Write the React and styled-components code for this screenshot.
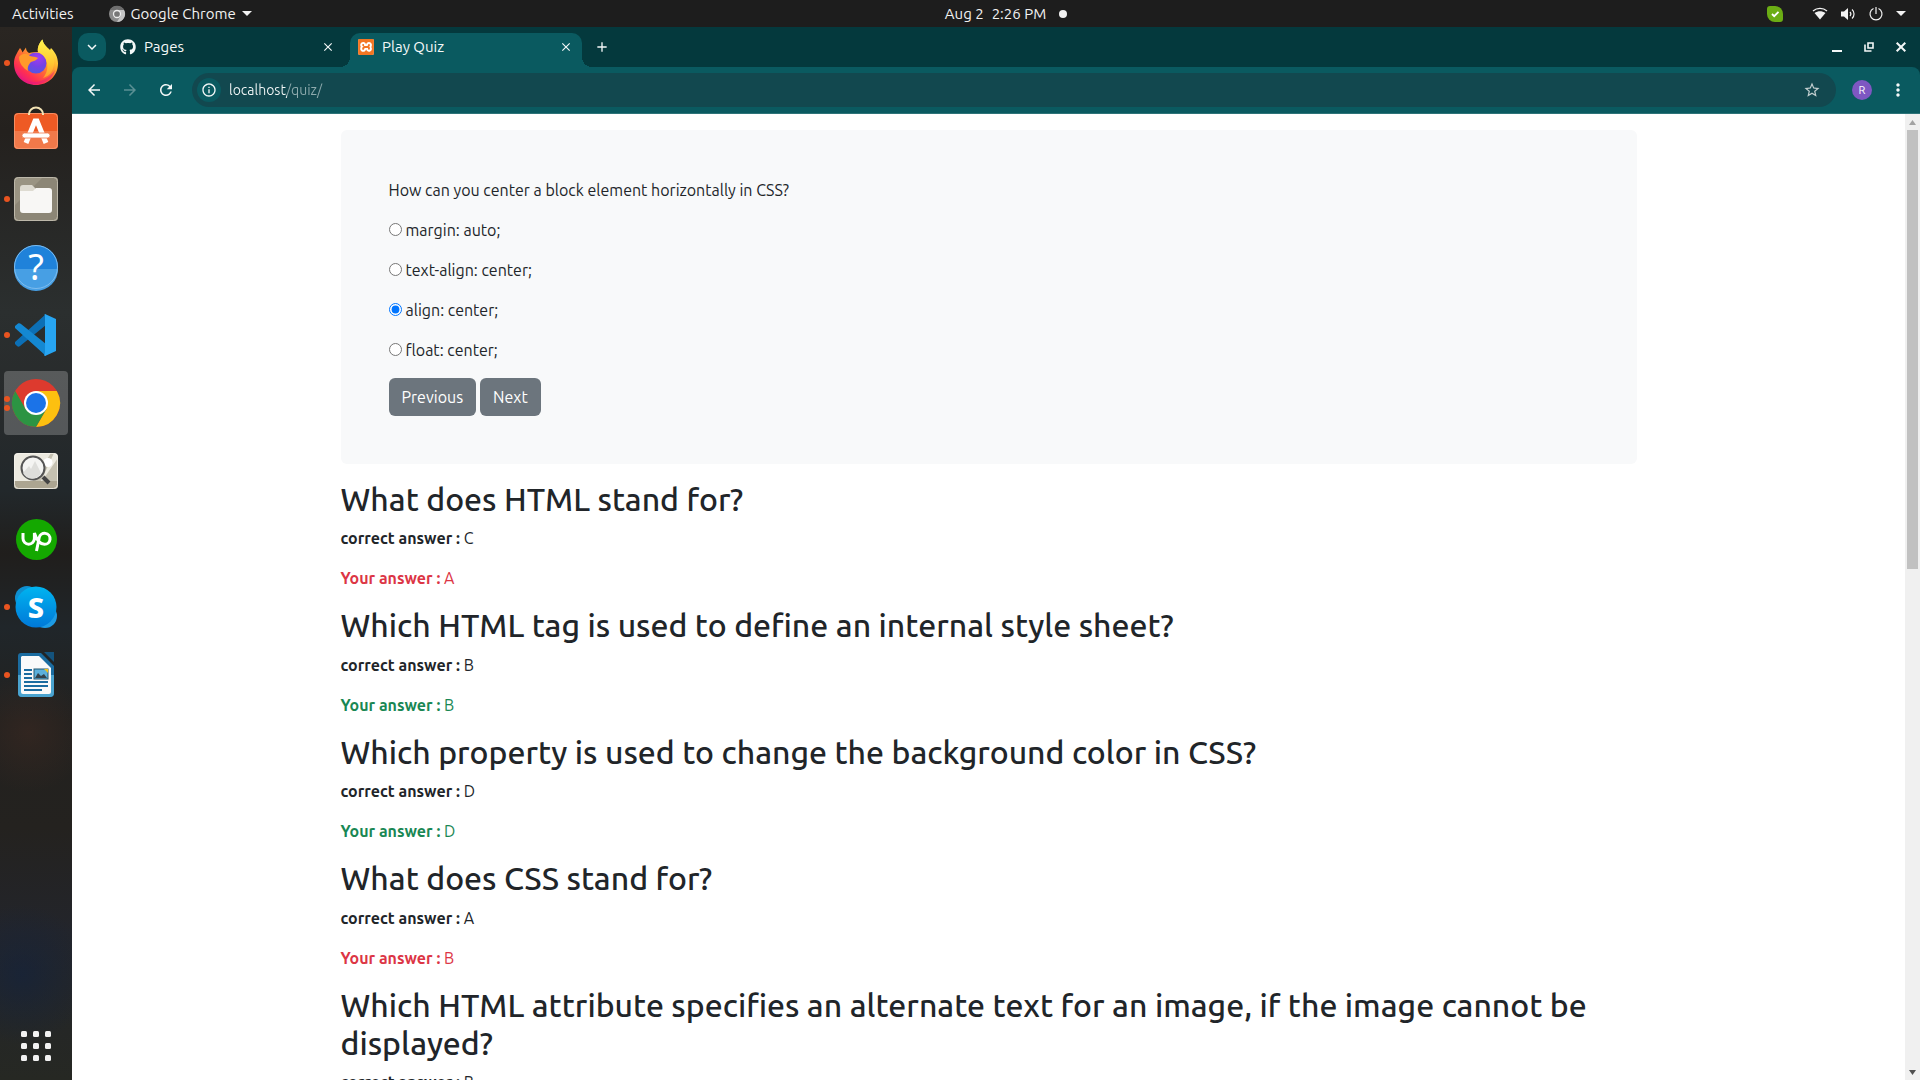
import React, { useState } from "react";
import styled, { createGlobalStyle, css } from "styled-components";
import { FaGithub } from "react-icons/fa";
import { SiXampp } from "react-icons/si";
import {
  MdArrowBack,
  MdArrowForward,
  MdRefresh,
  MdClose,
  MdAdd,
  MdStarBorder,
  MdMoreVert,
  MdKeyboardArrowDown,
  MdInfoOutline,
} from "react-icons/md";

const GlobalStyle = createGlobalStyle`
  *, *::before, *::after { box-sizing: border-box; }
  body {
    margin: 0;
    overflow: hidden;
    background: #1d1d1d;
    color: #212529;
    font-family: Ubuntu, "Noto Sans", "Open Sans", sans-serif;
    font-size: 16px;
    line-height: 24px;
  }
  button, input { font: inherit; }
  button { border: 0; padding: 0; background: none; color: inherit; cursor: pointer; }
  svg { display: block; flex: none; overflow: visible; }
`;

const Desktop = styled.div`
  display: flex;
  flex-direction: column;
  height: 100vh;
`;

/* ---------- system bar ---------- */

const SystemBar = styled.header`
  flex: none;
  display: grid;
  grid-template-columns: 1fr auto 1fr;
  align-items: center;
  height: 27px;
  padding: 0 14px 0 12px;
  background: #1d1d1d;
  color: #f2f2f2;
  font-size: 15px;
`;

const BarGroup = styled.div`
  display: flex;
  align-items: center;
  gap: ${(p) => p.$gap}px;
  justify-content: ${(p) => (p.$end ? "flex-end" : "flex-start")};
`;

const BarButton = styled.button`
  display: flex;
  align-items: center;
  gap: 6px;
`;

const Clock = styled.button`
  display: flex;
  align-items: center;
  gap: 8px;
  padding-left: 94px;
`;

const NotificationDot = styled.span`
  width: 8px;
  height: 8px;
  margin-left: 5px;
  border-radius: 50%;
  background: #f2f2f2;
`;

const StatusItem = styled.span`
  margin-right: ${(p) => p.$space}px;
`;

/* ---------- dock ---------- */

const Workspace = styled.div`
  flex: 1;
  display: flex;
  min-height: 0;
`;

const Dock = styled.nav`
  flex: none;
  display: flex;
  flex-direction: column;
  justify-content: space-between;
  align-items: center;
  width: 72px;
  padding: 4px 0 2px;
  background:
    radial-gradient(circle at 30% 90%, rgba(18, 34, 62, 0.6), transparent 70px),
    radial-gradient(circle at 40% 67%, rgba(64, 42, 34, 0.5), transparent 60px),
    linear-gradient(#2a2622 0%, #24211e 10%, #2b2f2f 27%, #282b2c 35%, #22282b 44%, #201e1c 50%, #20262a 57%, #22211f 66%, #24221f 76%, #23252b 86%, #262823 100%);
`;

const DockList = styled.div`
  display: flex;
  flex-direction: column;
  gap: 4px;
`;

const DockButton = styled.button`
  position: relative;
  display: flex;
  align-items: center;
  justify-content: center;
  width: 64px;
  height: 64px;
  border-radius: 4px;
  ${(p) =>
    p.$active &&
    css`
      background: rgba(255, 255, 255, 0.22);
    `}
`;

const Running = styled.span`
  position: absolute;
  left: 0;
  top: 0;
  bottom: 0;
  display: flex;
  flex-direction: column;
  justify-content: center;
  gap: 3px;
`;

const RunningDot = styled.span`
  width: 6px;
  height: 6px;
  border-radius: 50%;
  background: #e95420;
`;

/* ---------- browser ---------- */

const Browser = styled.div`
  flex: 1;
  display: flex;
  flex-direction: column;
  min-width: 0;
  background: #04393d;
  color: #f4f8f8;
  font-size: 15px;
`;

const TabStrip = styled.div`
  display: flex;
  align-items: flex-start;
  height: 40px;
  padding: 6px 12px 0 6px;
`;

const TabSearch = styled.button`
  display: flex;
  align-items: center;
  justify-content: center;
  width: 28px;
  height: 28px;
  border-radius: 10px;
  background: #0a5a60;
`;

const Tab = styled.div`
  position: relative;
  display: flex;
  align-items: center;
  width: ${(p) => (p.$active ? 232 : 244)}px;
  height: 34px;
  padding: ${(p) => (p.$active ? "0 9px 6px 8px" : "0 15px 6px 14px")};
  border-radius: 10px 10px 0 0;
  ${(p) =>
    p.$active &&
    css`
      background: #0a5a60;
      &::before,
      &::after {
        content: "";
        position: absolute;
        bottom: 0;
        width: 10px;
        height: 10px;
      }
      &::before {
        right: 100%;
        background: radial-gradient(circle at 0 0, transparent 10px, #0a5a60 10px);
      }
      &::after {
        left: 100%;
        background: radial-gradient(circle at 100% 0, transparent 10px, #0a5a60 10px);
      }
    `}
`;

const TabTitle = styled.button`
  flex: 1;
  display: flex;
  align-items: center;
  gap: 8px;
  text-align: left;
`;

const Favicon = styled.span`
  display: flex;
  align-items: center;
  justify-content: center;
  width: 16px;
  height: 16px;
  border-radius: 2px;
  background: ${(p) => p.$bg || "transparent"};
`;

const IconButton = styled.button`
  display: flex;
  align-items: center;
  justify-content: center;
  width: ${(p) => p.$size}px;
  height: ${(p) => p.$size}px;
  color: ${(p) => (p.$dim ? "#5b9094" : "inherit")};
`;

const NewTab = styled(IconButton)`
  margin: 0 auto 0 6px;
`;

const WindowControls = styled.div`
  display: flex;
  align-items: center;
  height: 28px;
  gap: 18px;
`;

const Toolbar = styled.div`
  display: flex;
  align-items: center;
  height: 47px;
  padding: 0 14px 1px 4px;
  border-bottom: 1px solid #2d7378;
  border-radius: 8px 8px 0 0;
  background: #0a5a60;
`;

const AddressBar = styled.label`
  flex: 1;
  display: flex;
  align-items: center;
  height: 34px;
  margin-left: 8px;
  padding: 0 15px 0 5px;
  border-radius: 17px;
  background: #12484f;
`;

const SiteInfo = styled.button`
  display: flex;
  align-items: center;
  justify-content: center;
  width: 24px;
  height: 24px;
  border-radius: 50%;
  background: #0a5a60;
`;

const Address = styled.input`
  flex: 1;
  min-width: 0;
  margin-left: 8px;
  padding: 0;
  border: 0;
  outline: 0;
  font-size: 14px;
  color: #f4f8f8;
  background: linear-gradient(90deg, #f4f8f8 58px, #8fabae 58px);
  background-clip: text;
  -webkit-background-clip: text;
  -webkit-text-fill-color: transparent;
`;

const Avatar = styled.button`
  width: 20px;
  height: 20px;
  margin: 0 18px 0 16px;
  border-radius: 50%;
  background: #7e57c2;
  color: #fff;
  font-size: 11px;
  line-height: 20px;
`;

/* ---------- page ---------- */

const Viewport = styled.div`
  flex: 1;
  display: flex;
  min-height: 0;
  background: #fff;
  color: #212529;
  font-size: 16px;
`;

const Page = styled.main`
  flex: 1;
  min-width: 0;
  overflow: hidden;
`;

const Container = styled.div`
  max-width: 1320px;
  margin: 0 auto;
  padding: 16px 12px 0;
`;

const Card = styled.form`
  margin-bottom: 16px;
  padding: 48px;
  border-radius: 6px;
  background: #f8f9fa;
`;

const Paragraph = styled.p`
  margin: 0 0 16px;
  color: ${(p) => p.$color || "inherit"};
`;

const Radio = styled.input`
  width: 13px;
  height: 13px;
  margin: 0 4px 0 0;
`;

const Actions = styled.div`
  display: flex;
  gap: 4px;
`;

const Button = styled.button`
  padding: 7px 13px;
  border-radius: 6px;
  background: #6c757d;
  color: #fff;
`;

const Question = styled.h2`
  margin: 0 0 8px;
  font-size: 32px;
  font-weight: 500;
  line-height: 1.2;
`;

const ScrollTrack = styled.div`
  flex: none;
  display: flex;
  flex-direction: column;
  align-items: center;
  width: 15px;
  padding: 6px 0 5px;
  gap: 5px;
  background: #f0f0f0;
`;

const ScrollSpace = styled.div`
  flex: 1;
  align-self: stretch;
  padding: 0 2px;
`;

const ScrollThumb = styled.div`
  height: 47%;
  background: #c1c1c1;
`;

/* ---------- dock drawings ---------- */

const Firefox = () => (
  <svg width="46" height="48" viewBox="0 0 46 48" aria-hidden="true">
    <defs>
      <linearGradient id="fxBody" x1="0.85" y1="0.1" x2="0.2" y2="0.95">
        <stop offset="0" stopColor="#fff44f" />
        <stop offset="0.3" stopColor="#ffb52e" />
        <stop offset="0.55" stopColor="#ff6a35" />
        <stop offset="0.8" stopColor="#ff2f51" />
        <stop offset="1" stopColor="#e31587" />
      </linearGradient>
      <radialGradient id="fxGlobe" cx="0.6" cy="0.25" r="0.85">
        <stop offset="0" stopColor="#a23bf0" />
        <stop offset="0.5" stopColor="#7542e5" />
        <stop offset="1" stopColor="#4a5ce0" />
      </radialGradient>
      <linearGradient id="fxTail" x1="0.5" y1="0" x2="0.5" y2="1">
        <stop offset="0" stopColor="#fff44f" />
        <stop offset="0.6" stopColor="#ffc932" />
        <stop offset="1" stopColor="#ff9a2e" />
      </linearGradient>
    </defs>
    <path d="M7 9 C8 10 9 12 9.500 13.500 L13 8.500 C13 11 14 13 16 14 C19 13 23 13 25 13 C24 8 27 3 29.500 0.500 C30 5 34 8 37 11 L38 9 C42 13 45 18 45 24.500 C45 37 35 46 23 46 C11 46 1 37 1 24.500 C1 18 4 14 7 9Z" fill="url(#fxBody)" />
    <circle cx="23" cy="24" r="10.500" fill="url(#fxGlobe)" />
    <path d="M25 13 C24 8 27 3 29.500 0.500 C30 6 35 9 38 13 C42 19 42 26 39 32 C37 36 33 38 30 39 C34 34 35 29 34 24 C33 18 29 15 25 13Z" fill="url(#fxTail)" />
    <path d="M6 18 C9 14 14 14 17 17 C20 18 23 17.500 25 19 C24 21 21 22 18 23 C16 25 14 28 15 32 C10 29 6 24 6 18Z" fill="#ff9a2b" />
    <path d="M3 32 C8 43 22 46 32 40 C36 38 40 34 42 31 C40 40 32 45 23 45 C14 45 6 40 3 32Z" fill="#e31587" opacity="0.45" />
  </svg>
);

const SoftwareStore = () => (
  <svg width="46" height="50" viewBox="0 0 46 50" aria-hidden="true">
    <rect x="1" y="7" width="44" height="36" rx="4" fill="#ee5a24" />
    <path d="M1 25 H45 V39 A4 4 0 0 1 41 43 H5 A4 4 0 0 1 1 39Z" fill="#f1794a" />
    <rect x="1.500" y="7.500" width="43" height="35" rx="4" fill="none" stroke="#f9a27e" strokeOpacity="0.7" />
    <path d="M16 9 V8 A7 6.500 0 0 1 30 8 V9" fill="none" stroke="#f3e3b4" strokeWidth="2" />
    <path d="M13 37 L22 15 H24 L33 37" fill="none" stroke="#fff" strokeWidth="5" />
    <rect x="9" y="27" width="28" height="5" rx="2.500" fill="#fff" stroke="#ef7c50" strokeWidth="0.800" />
  </svg>
);

const Files = () => (
  <svg width="46" height="46" viewBox="0 0 46 46" aria-hidden="true">
    <rect x="1" y="1" width="44" height="44" rx="4" fill="#9a9483" />
    <path d="M1 30 L30 1 H41 A4 4 0 0 1 45 5 V41 A4 4 0 0 1 41 45 H5 A4 4 0 0 1 1 41Z" fill="#8c8676" />
    <rect x="1.500" y="1.500" width="43" height="43" rx="4" fill="none" stroke="#bdb8aa" />
    <path d="M7 12 A3 3 0 0 1 10 9 H19 L23 13 H36 V20 H7Z" fill="#dedbd1" />
    <path d="M7 15 H20 L23 12 H36 A3 3 0 0 1 39 15 V34 A3 3 0 0 1 36 37 H10 A3 3 0 0 1 7 34Z" fill="#f8f7f5" />
  </svg>
);

const Help = () => (
  <svg width="46" height="46" viewBox="0 0 46 46" aria-hidden="true">
    <circle cx="23" cy="23" r="22" fill="#1f82da" />
    <path d="M1 25 H45 A22 22 0 0 1 1 25Z" fill="#479fe4" />
    <circle cx="23" cy="23" r="21.500" fill="none" stroke="#7dbcee" />
    <text x="23" y="36" textAnchor="middle" fontFamily="Noto Sans" fontSize="36" fill="#fff">?</text>
  </svg>
);

const Code = () => (
  <svg width="44" height="44" viewBox="0 0 44 44" aria-hidden="true">
    <path d="M1 29 L32 1 V12 L6 33 C5 34 4 34 3 33 L1 31Z" fill="#0c6fb5" />
    <path d="M1 13 L4 10.500 C5 10 6 10 7 11 L32 31 V43 L1 15Z" fill="#1488d2" />
    <path d="M31 1 L42 6 V38 L31 43 C30 43 30 42 31 40 V4 C31 2 30 1 31 1Z" fill="#27a5f2" />
  </svg>
);

const Chrome = () => (
  <svg width="48" height="48" viewBox="0 0 48 48" aria-hidden="true">
    <circle cx="24" cy="24" r="24" fill="#dd3a2e" />
    <path d="M24 12 H44.800 A24 24 0 0 1 24 48 L34.400 30Z" fill="#fdc010" />
    <path d="M13.600 30 L3.200 12 A24 24 0 0 0 24 48 L34.400 30Z" fill="#2c9443" />
    <circle cx="24" cy="24" r="12" fill="#fff" />
    <circle cx="24" cy="24" r="10" fill="#1b73e8" />
  </svg>
);

const ImageViewer = () => (
  <svg width="46" height="38" viewBox="0 0 46 38" aria-hidden="true">
    <rect x="1" y="1" width="44" height="36" rx="4" fill="#eceae0" />
    <path d="M29 29 L45 6 V29Z M20 29 L38 1 H41 L28 29Z" fill="#c5c1b1" />
    <path d="M1 29 H45 V33 A4 4 0 0 1 41 37 H5 A4 4 0 0 1 1 33Z" fill="#aca591" />
    <circle cx="35" cy="10.500" r="4.500" fill="#fff" />
    <path d="M30 25 L36 31" stroke="#444" strokeWidth="4" />
    <circle cx="20" cy="16" r="11.500" fill="#f4f4f2" stroke="#555" strokeWidth="2" />
    <path d="M10 21 L16 14 L18 17 L22 9 L28 21 A10 10 0 0 1 10 21Z" fill="#dededb" />
    <rect x="1.500" y="1.500" width="43" height="35" rx="4" fill="none" stroke="#f6f4ec" strokeOpacity="0.8" />
  </svg>
);

const Upwork = () => (
  <svg width="41" height="41" viewBox="0 0 41 41" aria-hidden="true">
    <circle cx="20.500" cy="20.500" r="20.500" fill="#14a800" />
    <path
      d="M7 14 V19.500 A5.700 5.700 0 0 0 18.400 19.500 V14 C20 19 23 25.300 28.500 25.300 A5.500 5.500 0 1 0 23.200 18.500 L20.500 32"
      fill="none"
      stroke="#fff"
      strokeWidth="3"
    />
  </svg>
);

const Skype = () => (
  <svg width="44" height="44" viewBox="0 0 44 44" aria-hidden="true">
    <defs>
      <linearGradient id="skypeFill" x1="0" y1="0" x2="0" y2="1">
        <stop offset="0" stopColor="#00b4f0" />
        <stop offset="1" stopColor="#0078d8" />
      </linearGradient>
    </defs>
    <circle cx="13" cy="13" r="12" fill="#0f8fd0" />
    <circle cx="31" cy="31" r="12" fill="#1d9be4" />
    <circle cx="22" cy="22" r="20.500" fill="url(#skypeFill)" />
    <text x="22" y="32.500" textAnchor="middle" fontFamily="Noto Sans" fontWeight="800" fontSize="29" fill="#fff">S</text>
  </svg>
);

const Writer = () => (
  <svg width="38" height="46" viewBox="0 0 38 46" aria-hidden="true">
    <path d="M4 1 H24 L37 14 V41 A4 4 0 0 1 33 45 H5 A4 4 0 0 1 1 41 V4 A3 3 0 0 1 4 1Z" fill="#1b6ca0" />
    <path d="M1 23 H37 V41 A4 4 0 0 1 33 45 H5 A4 4 0 0 1 1 41Z" fill="#4aa3cf" />
    <path d="M5 4 H22 L34 16 V40 A2 2 0 0 1 32 42 H6 A2 2 0 0 1 4 40 V5Z" fill="#fafafa" />
    <path d="M27 0 H37 V10Z" fill="#14537d" />
    <path d="M7 18 H15 M7 22 H15 M7 26 H15 M7 30 H31 M7 34 H31 M7 38 H25" stroke="#1b6ca0" strokeWidth="2" />
    <rect x="17" y="17" width="14" height="10" fill="#5bb0dc" stroke="#24566f" />
    <path d="M18 26 L21 21 L24 24 L27 22 L30 26Z" fill="#33424c" />
    <path d="M27 17 H31 V21Z" fill="#f0c419" />
  </svg>
);

const AppGrid = () => (
  <svg width="30" height="30" viewBox="0 0 30 30" fill="#f2f2f2" aria-hidden="true">
    {[0, 12, 24].map((y) =>
      [0, 12, 24].map((x) => <rect key={`${x}-${y}`} x={x} y={y} width="6" height="6" rx="1.500" />)
    )}
  </svg>
);

const MonoChrome = () => (
  <svg width="16" height="16" viewBox="0 0 16 16" aria-hidden="true">
    <circle cx="8" cy="8" r="8" fill="#8b8b8b" />
    <path d="M8 4 H15 A8 8 0 0 1 8 16 L11.500 10Z" fill="#c4c4c4" />
    <path d="M1 4 A8 8 0 0 1 15 4 H8Z" fill="#6e6e6e" />
    <circle cx="8" cy="8" r="3.500" fill="#777" stroke="#eee" strokeWidth="1.300" />
  </svg>
);

const Caret = ({ width = 10, color = "#f2f2f2", up = false }) => (
  <svg width={width} height="5" viewBox="0 0 10 5" preserveAspectRatio="none" aria-hidden="true">
    <path d={up ? "M0 5 H10 L5 0Z" : "M0 0 H10 L5 5Z"} fill={color} />
  </svg>
);

const Online = () => (
  <svg width="16" height="16" viewBox="0 0 16 16" aria-hidden="true">
    <path d="M0 3 A3 3 0 0 1 3 0 H8 A8 8 0 0 1 16 8 V13 A3 3 0 0 1 13 16 H8 A8 8 0 0 1 0 8Z" fill="#6bad14" />
    <path d="M5 8 L7.200 10.200 L11.500 5.800" fill="none" stroke="#fff" strokeWidth="1.800" />
  </svg>
);

const Wifi = () => (
  <svg width="16" height="13" viewBox="0 0 16 13" aria-hidden="true">
    <path d="M1 4 C5 0.500 11 0.500 15 4" fill="none" stroke="#f2f2f2" strokeWidth="1.400" />
    <path d="M2.500 6 C6 3.500 10 3.500 13.500 6 L8 12.500Z" fill="#f2f2f2" />
  </svg>
);

const Volume = () => (
  <svg width="15" height="14" viewBox="0 0 15 14" fill="none" stroke="#f2f2f2" aria-hidden="true">
    <path d="M0 4.500 H3 L7 1 V13 L3 9.500 H0Z" fill="#f2f2f2" stroke="none" />
    <path d="M9 5 A3 3 0 0 1 9 9" strokeWidth="1.200" />
    <path d="M11 2.500 A6 6 0 0 1 11 11.500" strokeWidth="1.200" />
  </svg>
);

const Power = () => (
  <svg width="14" height="14" viewBox="0 0 14 14" fill="none" stroke="#f2f2f2" strokeWidth="1.200" aria-hidden="true">
    <path d="M4.500 1.500 A6 6 0 1 0 9.500 1.500 M7 0 V7" />
  </svg>
);

const Minimize = () => (
  <svg width="10" height="10" viewBox="0 0 10 10" aria-hidden="true">
    <path d="M0 9 H10" stroke="#f4f8f8" strokeWidth="2" />
  </svg>
);

const Restore = () => (
  <svg width="10" height="10" viewBox="0 0 10 10" fill="none" stroke="#f4f8f8" strokeWidth="1.600" aria-hidden="true">
    <path d="M4 1 H9 V6 H4Z M1 2.500 V9 H7.500" />
  </svg>
);

const CloseWindow = () => (
  <svg width="10" height="10" viewBox="0 0 10 10" stroke="#f4f8f8" strokeWidth="2" aria-hidden="true">
    <path d="M0.700 0.700 L9.300 9.300 M9.300 0.700 L0.700 9.300" />
  </svg>
);

/* ---------- data ---------- */

const apps = [
  { name: "Firefox", icon: <Firefox />, running: 1 },
  { name: "Ubuntu Software", icon: <SoftwareStore />, running: 0 },
  { name: "Files", icon: <Files />, running: 1 },
  { name: "Help", icon: <Help />, running: 0 },
  { name: "Visual Studio Code", icon: <Code />, running: 1 },
  { name: "Google Chrome", icon: <Chrome />, running: 2, active: true },
  { name: "Image Viewer", icon: <ImageViewer />, running: 0 },
  { name: "Upwork", icon: <Upwork />, running: 0 },
  { name: "Skype", icon: <Skype />, running: 1 },
  { name: "LibreOffice Writer", icon: <Writer />, running: 1 },
];

const options = ["margin: auto;", "text-align: center;", "align: center;", "float: center;"];

const results = [
  { question: "What does HTML stand for?", correct: "C", given: "A" },
  { question: "Which HTML tag is used to define an internal style sheet?", correct: "B", given: "B" },
  { question: "Which property is used to change the background color in CSS?", correct: "D", given: "D" },
  { question: "What does CSS stand for?", correct: "A", given: "B" },
  {
    question: "Which HTML attribute specifies an alternate text for an image, if the image cannot be displayed?",
    correct: "B",
    given: "B",
  },
];

function QuizCard() {
  const [selected, setSelected] = useState(2);
  return (
    <Card onSubmit={(e) => e.preventDefault()}>
      <Paragraph>How can you center a block element horizontally in CSS?</Paragraph>
      {options.map((option, i) => (
        <Paragraph key={option}>
          <Radio
            type="radio"
            name="answer"
            id={`answer-${i}`}
            checked={selected === i}
            onChange={() => setSelected(i)}
          />
          <label htmlFor={`answer-${i}`}>{option}</label>
        </Paragraph>
      ))}
      <Actions>
        <Button type="button">Previous</Button>
        <Button type="button">Next</Button>
      </Actions>
    </Card>
  );
}

function Result({ question, correct, given }) {
  return (
    <section>
      <Question>{question}</Question>
      <Paragraph>
        <b>correct answer :</b> {correct}
      </Paragraph>
      <Paragraph $color={correct === given ? "#198754" : "#dc3545"}>
        <b>Your answer :</b> {given}
      </Paragraph>
    </section>
  );
}

export default function App() {
  return (
    <Desktop>
      <GlobalStyle />
      <SystemBar>
        <BarGroup $gap={35}>
          <BarButton>Activities</BarButton>
          <BarButton>
            <MonoChrome />
            Google Chrome
            <Caret />
          </BarButton>
        </BarGroup>
        <Clock>
          <span>Aug 2</span>
          <span>2:26 PM</span>
          <NotificationDot />
        </Clock>
        <BarGroup $gap={13} $end>
          <StatusItem $space={16}>
            <Online />
          </StatusItem>
          <Wifi />
          <Volume />
          <Power />
          <Caret />
        </BarGroup>
      </SystemBar>

      <Workspace>
        <Dock aria-label="Dock">
          <DockList>
            {apps.map((app) => (
              <DockButton key={app.name} aria-label={app.name} $active={app.active}>
                <Running>
                  {Array.from({ length: app.running }, (_, i) => (
                    <RunningDot key={i} />
                  ))}
                </Running>
                {app.icon}
              </DockButton>
            ))}
          </DockList>
          <DockButton aria-label="Show Applications">
            <AppGrid />
          </DockButton>
        </Dock>

        <Browser>
          <TabStrip>
            <TabSearch aria-label="Search tabs">
              <MdKeyboardArrowDown size={18} />
            </TabSearch>
            <Tab>
              <TabTitle>
                <Favicon>
                  <FaGithub size={16} />
                </Favicon>
                Pages
              </TabTitle>
              <IconButton $size={14} aria-label="Close Pages">
                <MdClose size={14} />
              </IconButton>
            </Tab>
            <Tab $active>
              <TabTitle>
                <Favicon $bg="#fff">
                  <SiXampp size={16} color="#f37623" />
                </Favicon>
                Play Quiz
              </TabTitle>
              <IconButton $size={14} aria-label="Close Play Quiz">
                <MdClose size={14} />
              </IconButton>
            </Tab>
            <NewTab $size={28} aria-label="New tab">
              <MdAdd size={16} />
            </NewTab>
            <WindowControls>
              <IconButton $size={14} aria-label="Minimize">
                <Minimize />
              </IconButton>
              <IconButton $size={14} aria-label="Restore">
                <Restore />
              </IconButton>
              <IconButton $size={14} aria-label="Close">
                <CloseWindow />
              </IconButton>
            </WindowControls>
          </TabStrip>

          <Toolbar>
            <IconButton $size={36} aria-label="Back">
              <MdArrowBack size={18} />
            </IconButton>
            <IconButton $size={36} $dim aria-label="Forward">
              <MdArrowForward size={18} />
            </IconButton>
            <IconButton $size={36} aria-label="Reload">
              <MdRefresh size={18} />
            </IconButton>
            <AddressBar>
              <SiteInfo aria-label="Site information">
                <MdInfoOutline size={16} />
              </SiteInfo>
              <Address aria-label="Address" defaultValue="localhost/quiz/" spellCheck={false} />
              <IconButton $size={18} aria-label="Bookmark">
                <MdStarBorder size={18} color="#c3cfd0" />
              </IconButton>
            </AddressBar>
            <Avatar>R</Avatar>
            <IconButton $size={16} aria-label="Menu">
              <MdMoreVert size={20} />
            </IconButton>
          </Toolbar>

          <Viewport>
            <Page>
              <Container>
                <QuizCard />
                {results.map((result) => (
                  <Result key={result.question} {...result} />
                ))}
              </Container>
            </Page>
            <ScrollTrack aria-hidden="true">
              <Caret width={7} color="#a3a3a3" up />
              <ScrollSpace>
                <ScrollThumb />
              </ScrollSpace>
              <Caret width={7} color="#505050" />
            </ScrollTrack>
          </Viewport>
        </Browser>
      </Workspace>
    </Desktop>
  );
}
